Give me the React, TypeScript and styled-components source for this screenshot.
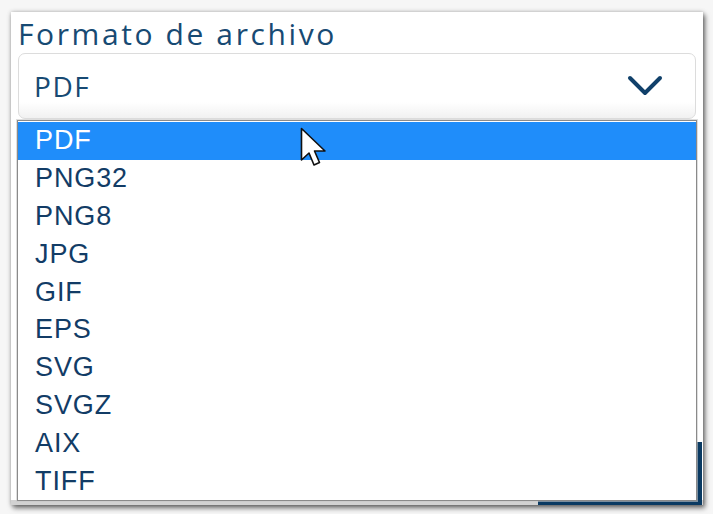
import React from "react";
import styled, { createGlobalStyle } from "styled-components";

const Global = createGlobalStyle`
  html, body { margin: 0; padding: 0; background: #f6f6f6; }
  body { width: 713px; height: 514px; overflow: hidden; }
`;

const Page = styled.div`
  width: 713px;
  height: 514px;
  padding: 12px 0 0 11px;
  box-sizing: border-box;
`;

const Panel = styled.div`
  position: relative;
  width: 692px;
  height: 493px;
  background: #ffffff;
  box-shadow: inset 0 -5px 0 #d2d2d2, 2px 3px 5px rgba(0, 0, 0, 0.55), 0 0 4px rgba(0, 0, 0, 0.25);
  padding: 3px 7px 0 7px;
  box-sizing: border-box;
  display: flex;
  flex-direction: column;
`;

const Label = styled.div`
  font-family: "Open Sans", "Noto Sans", sans-serif;
  font-size: 30px;
  line-height: 37px;
  color: #174a73;
  letter-spacing: 2.6px;
`;

const SelectBox = styled.div`
  margin-top: 1px;
  height: 66px;
  border: 1px solid #dcdcdc;
  border-radius: 7px;
  background: linear-gradient(#ffffff 75%, #f1f1f1);
  display: flex;
  align-items: center;
  justify-content: space-between;
  padding: 0 32px 0 15px;
  box-sizing: border-box;
`;

const SelectValue = styled.span`
  font-family: "Open Sans", "Noto Sans", sans-serif;
  font-size: 28px;
  color: #174a73;
  letter-spacing: 1.6px;
`;

const Chevron = styled.svg`
  width: 36px;
  height: 22px;
  display: block;
`;

const Spacer = styled.div`
  flex: 1;
`;

const BottomRow = styled.div`
  display: flex;
  justify-content: flex-end;
  margin: 0 -6px 0 0;
`;

const HiddenButton = styled.div`
  width: 164px;
  height: 63px;
  background: #0a3a62;
`;

const Menu = styled.ul`
  position: absolute;
  left: 6px;
  top: 108px;
  width: 680px;
  height: 381px;
  margin: 0;
  padding: 1px 0 0;
  list-style: none;
  background: #ffffff;
  border: 1px solid #8a8a8a;
  box-sizing: border-box;
  box-shadow: 0 0 0 1px rgba(200, 200, 200, 0.6);
`;

const Option = styled.li<{ $active?: boolean }>`
  height: 37.8px;
  display: flex;
  align-items: center;
  padding-left: 17px;
  font-family: "Liberation Sans", Arial, sans-serif;
  font-size: 27px;
  letter-spacing: 0.9px;
  color: ${(p) => (p.$active ? "#ffffff" : "#123c66")};
  background: ${(p) => (p.$active ? "#1f8dfa" : "transparent")};
`;

const Cursor = styled.svg`
  position: absolute;
  left: 289px;
  top: 115px;
  width: 30px;
  height: 44px;
`;

const options = ["PDF", "PNG32", "PNG8", "JPG", "GIF", "EPS", "SVG", "SVGZ", "AIX", "TIFF"];

export default function App() {
  return (
    <Page>
      <Global />
      <Panel>
        <Label>Formato de archivo</Label>
        <SelectBox>
          <SelectValue>PDF</SelectValue>
          <Chevron viewBox="0 0 36 22">
            <path d="M3 3 L18 18 L33 3" fill="none" stroke="#10406a" strokeWidth="4" strokeLinecap="round" strokeLinejoin="round" />
          </Chevron>
        </SelectBox>
        <Spacer />
        <BottomRow>
          <HiddenButton />
        </BottomRow>
        <Menu>
          {options.map((o, i) => (
            <Option key={o} $active={i === 0}>
              {o}
            </Option>
          ))}
        </Menu>
        <Cursor viewBox="0 0 30 44">
          <path d="M1.5 1.5 L1.5 33 L9 26 L14 38 L19.5 35.5 L14.5 24 L25 24 Z" fill="#ffffff" stroke="#111" strokeWidth="1.6" strokeLinejoin="round" />
        </Cursor>
      </Panel>
    </Page>
  );
}
